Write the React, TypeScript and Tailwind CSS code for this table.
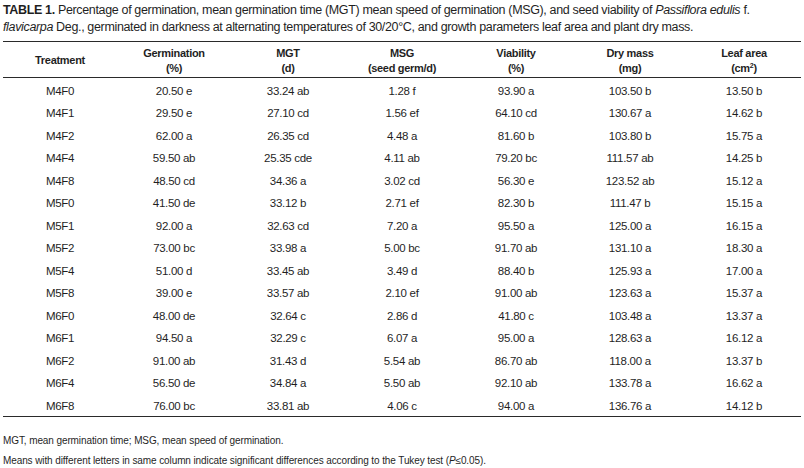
const HEADERS: [string, React.ReactNode][] = [
  ['Treatment', null],
  ['Germination', '(%)'],
  ['MGT', '(d)'],
  ['MSG', '(seed germ/d)'],
  ['Viability', '(%)'],
  ['Dry mass', '(mg)'],
  ['Leaf area', <>(cm<sup className="text-[7px]">2</sup>)</>],
]

const ROWS = [
  ['M4F0', '20.50 e', '33.24 ab', '1.28 f', '93.90 a', '103.50 b', '13.50 b'],
  ['M4F1', '29.50 e', '27.10 cd', '1.56 ef', '64.10 cd', '130.67 a', '14.62 b'],
  ['M4F2', '62.00 a', '26.35 cd', '4.48 a', '81.60 b', '103.80 b', '15.75 a'],
  ['M4F4', '59.50 ab', '25.35 cde', '4.11 ab', '79.20 bc', '111.57 ab', '14.25 b'],
  ['M4F8', '48.50 cd', '34.36 a', '3.02 cd', '56.30 e', '123.52 ab', '15.12 a'],
  ['M5F0', '41.50 de', '33.12 b', '2.71 ef', '82.30 b', '111.47 b', '15.15 a'],
  ['M5F1', '92.00 a', '32.63 cd', '7.20 a', '95.50 a', '125.00 a', '16.15 a'],
  ['M5F2', '73.00 bc', '33.98 a', '5.00 bc', '91.70 ab', '131.10 a', '18.30 a'],
  ['M5F4', '51.00 d', '33.45 ab', '3.49 d', '88.40 b', '125.93 a', '17.00 a'],
  ['M5F8', '39.00 e', '33.57 ab', '2.10 ef', '91.00 ab', '123.63 a', '15.37 a'],
  ['M6F0', '48.00 de', '32.64 c', '2.86 d', '41.80 c', '103.48 a', '13.37 a'],
  ['M6F1', '94.50 a', '32.29 c', '6.07 a', '95.00 a', '128.63 a', '16.12 a'],
  ['M6F2', '91.00 ab', '31.43 d', '5.54 ab', '86.70 ab', '118.00 a', '13.37 b'],
  ['M6F4', '56.50 de', '34.84 a', '5.50 ab', '92.10 ab', '133.78 a', '16.62 a'],
  ['M6F8', '76.00 bc', '33.81 ab', '4.06 c', '94.00 a', '136.76 a', '14.12 b'],
]

export default function App() {
  return (
    <div
      className="w-[804px] h-[468px] bg-white text-[#1f1f1f] px-[3px] overflow-hidden"
      style={{ fontFamily: '"Liberation Sans Narrow", "Arial Narrow", "Liberation Sans", sans-serif' }}
    >
      {/* Caption */}
      <p className="text-[12.5px] leading-[17px] tracking-[-0.35px] pt-[2px] whitespace-nowrap">
        <span className="font-bold">TABLE 1.</span> Percentage of germination, mean germination time (MGT) mean speed
        of germination (MSG), and seed viability of <i>Passiflora edulis</i> f.
        <br />
        <i>flavicarpa</i> Deg., germinated in darkness at alternating temperatures of 30/20°C, and growth parameters
        leaf area and plant dry mass.
      </p>

      {/* Table */}
      <div className="mt-[5px] w-[798px] border-t border-b border-[#2a2a2a]">
        <div className="grid grid-cols-7 h-[36px] items-center border-b border-[#2a2a2a] text-[11px] leading-[15px] tracking-[-0.3px] font-bold text-center">
          {HEADERS.map(([label, unit]) => (
            <div key={label} className="pt-[2px]">
              <div>{label}</div>
              {unit && <div>{unit}</div>}
            </div>
          ))}
        </div>
        <div className="pt-[2px] -mb-[2px]">
          {ROWS.map((row) => (
            <div
              key={row[0]}
              className="grid grid-cols-7 h-[22.5px] items-center text-[11.5px] tracking-[-0.3px] text-center"
            >
              {row.map((cell, i) => (
                <div key={i}>{cell}</div>
              ))}
            </div>
          ))}
        </div>
      </div>

      {/* Footnotes */}
      <p className="mt-[17px] text-[10px] leading-[13px] tracking-[-0.1px]">
        MGT, mean germination time; MSG, mean speed of germination.
      </p>
      <p className="mt-[7px] text-[10px] leading-[13px] tracking-[-0.1px]">
        Means with different letters in same column indicate significant differences according to the Tukey test (
        <i>P</i>≤0.05).
      </p>
    </div>
  )
}
